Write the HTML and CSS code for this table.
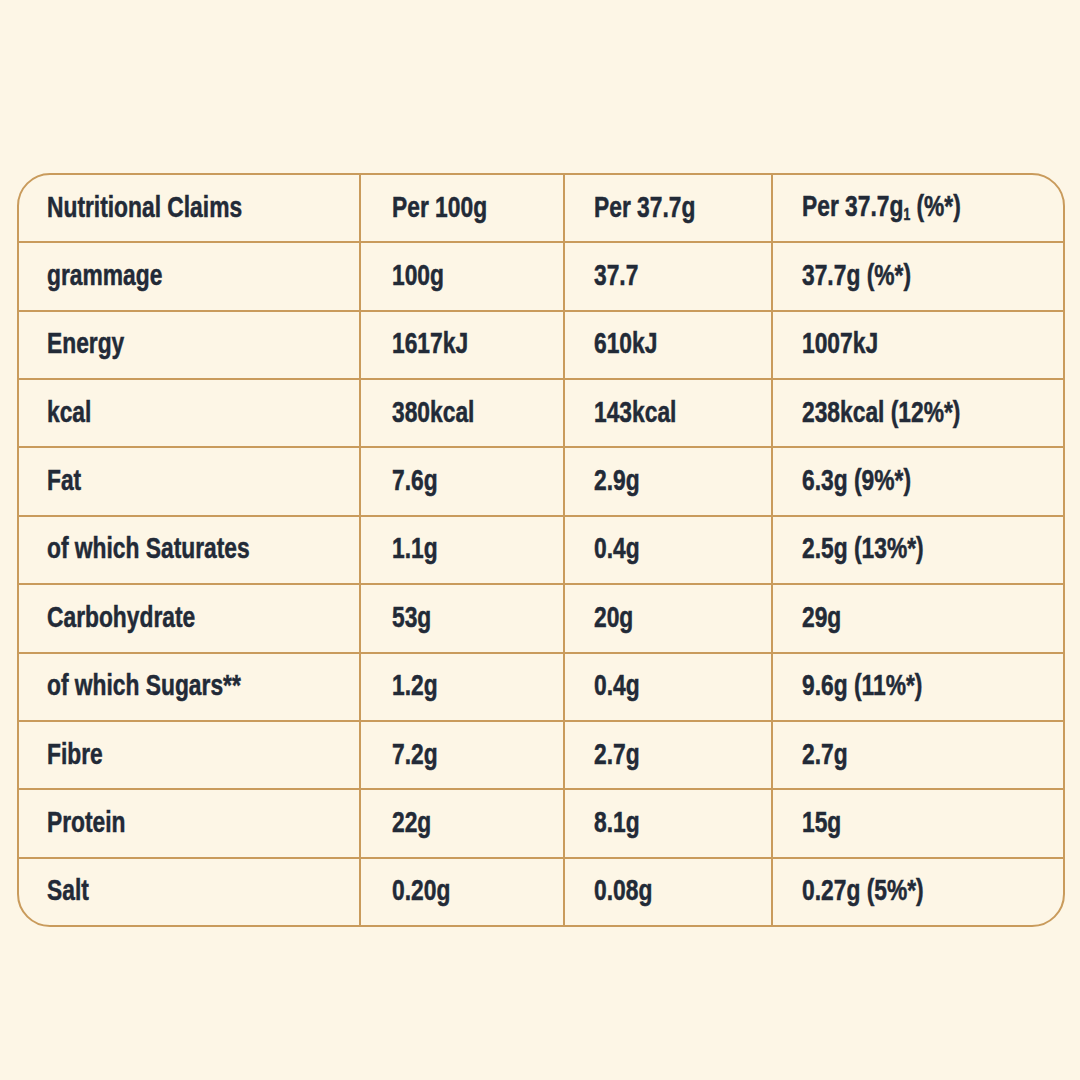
FILE: index.html
```html
<!DOCTYPE html>
<html lang="en">
<head>
<meta charset="utf-8">
<title>Nutritional Claims</title>
<link rel="stylesheet" href="styles.css">
</head>
<body>
<main class="page">
  <div class="card">
    <table class="nutri">
      <colgroup>
        <col class="c1"><col class="c2"><col class="c3"><col class="c4">
      </colgroup>
      <tbody>
        <tr><td><span class="t">Nutritional Claims</span></td><td><span class="t">Per 100g</span></td><td><span class="t">Per 37.7g</span></td><td><span class="t">Per 37.7g<sub>1</sub> (%*)</span></td></tr>
        <tr><td><span class="t">grammage</span></td><td><span class="t">100g</span></td><td><span class="t">37.7</span></td><td><span class="t">37.7g (%*)</span></td></tr>
        <tr><td><span class="t">Energy</span></td><td><span class="t">1617kJ</span></td><td><span class="t">610kJ</span></td><td><span class="t">1007kJ</span></td></tr>
        <tr><td><span class="t">kcal</span></td><td><span class="t">380kcal</span></td><td><span class="t">143kcal</span></td><td><span class="t">238kcal (12%*)</span></td></tr>
        <tr><td><span class="t">Fat</span></td><td><span class="t">7.6g</span></td><td><span class="t">2.9g</span></td><td><span class="t">6.3g (9%*)</span></td></tr>
        <tr><td><span class="t">of which Saturates</span></td><td><span class="t">1.1g</span></td><td><span class="t">0.4g</span></td><td><span class="t">2.5g (13%*)</span></td></tr>
        <tr><td><span class="t">Carbohydrate</span></td><td><span class="t">53g</span></td><td><span class="t">20g</span></td><td><span class="t">29g</span></td></tr>
        <tr><td><span class="t">of which Sugars**</span></td><td><span class="t">1.2g</span></td><td><span class="t">0.4g</span></td><td><span class="t">9.6g (11%*)</span></td></tr>
        <tr><td><span class="t">Fibre</span></td><td><span class="t">7.2g</span></td><td><span class="t">2.7g</span></td><td><span class="t">2.7g</span></td></tr>
        <tr><td><span class="t">Protein</span></td><td><span class="t">22g</span></td><td><span class="t">8.1g</span></td><td><span class="t">15g</span></td></tr>
        <tr><td><span class="t">Salt</span></td><td><span class="t">0.20g</span></td><td><span class="t">0.08g</span></td><td><span class="t">0.27g (5%*)</span></td></tr>
      </tbody>
    </table>
  </div>
</main>
</body>
</html>
```
FILE: styles.css
```css
html, body {
  margin: 0;
  padding: 0;
  background: #fdf6e6;
}
.page {
  width: 1080px;
  height: 1080px;
  display: flex;
  align-items: center;
  justify-content: center;
  padding-left: 2px;
  box-sizing: border-box;
}
.card {
  border: 2px solid #c99b5c;
  border-radius: 33px;
  overflow: hidden;
  width: 1044px;
  margin-top: 20px;
}
.nutri {
  border-collapse: separate;
  border-spacing: 0;
  table-layout: fixed;
  width: 1044px;
  font-family: "Liberation Sans", Arial, sans-serif;
  font-weight: 700;
  font-size: 30px;
  color: #222a37;
}
.c1 { width: 342px; }
.c2 { width: 204px; }
.c3 { width: 208px; }
.c4 { width: 290px; }
.nutri td {
  height: 66.4px;
  padding: 0 0 0 29px;
  border-right: 2px solid #c99b5c;
  border-bottom: 2px solid #c99b5c;
  vertical-align: middle;
  white-space: nowrap;
  box-sizing: content-box;
  line-height: 1;
}
.nutri td:first-child { padding-left: 28px; }
.nutri td:nth-child(2) { padding-left: 31px; }
.nutri td:last-child { border-right: none; }
.nutri tr:last-child td { border-bottom: none; }
.t {
  display: inline-block;
  transform: scaleX(0.76);
  transform-origin: left center;
  letter-spacing: 0;
  -webkit-text-stroke: 0.5px #222a37;
  padding-bottom: 3px;
}
.t sub {
  font-size: 16px;
  vertical-align: -4px;
}
```
